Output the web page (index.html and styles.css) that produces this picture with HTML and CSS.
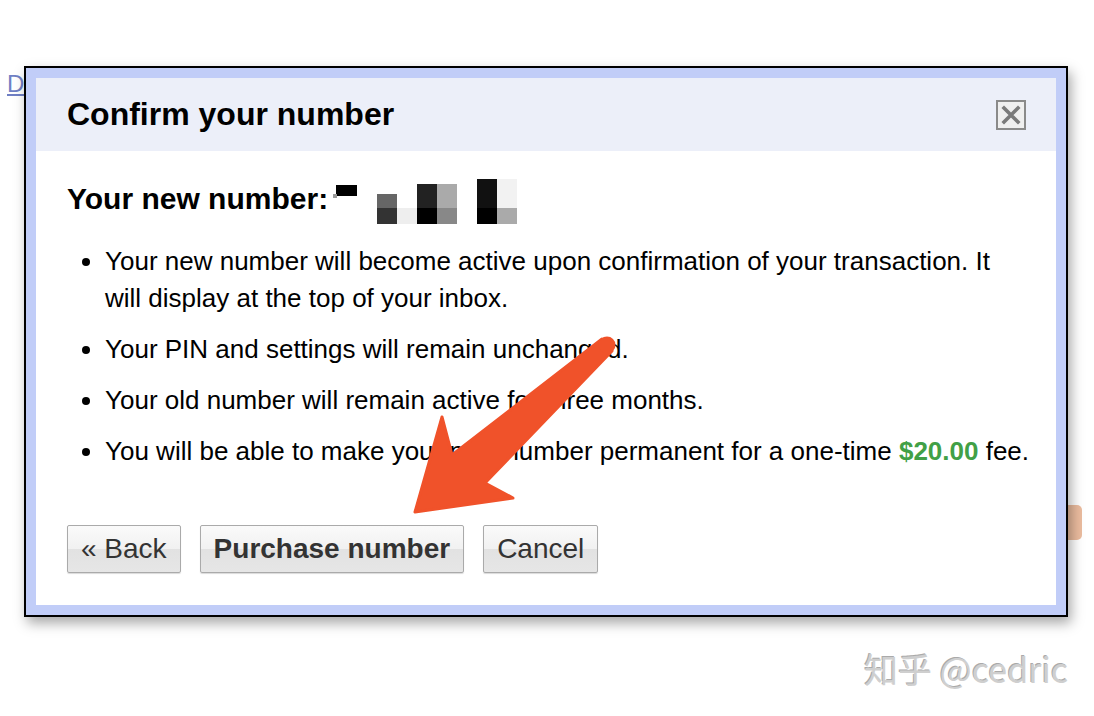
FILE: index.html
```html
<!DOCTYPE html>
<html>
<head>
<meta charset="utf-8">
<link rel="stylesheet" href="styles.css">
</head>
<body>
<div class="page">
  <a class="bg-link" href="#">D</a>
  <div class="bg-btn"></div>
  <div class="dialog">
    <div class="frame">
      <div class="header">
        <h1 class="title">Confirm your number</h1>
        <div class="close">
          <svg width="22" height="22" viewBox="0 0 22 22"><path d="M4 4 L18 18 M18 4 L4 18" stroke="#7a7a7a" stroke-width="3.6" stroke-linecap="square"/></svg>
        </div>
      </div>
      <div class="body">
        <h2 class="newnum">Your new number:<svg class="pix" width="190" height="50" viewBox="0 0 190 50">
          <rect x="3" y="8" width="21" height="11" fill="#000"/>
          <rect x="0" y="17" width="4" height="4" fill="#999"/>
          <rect x="44" y="17" width="20" height="14" fill="#666"/>
          <rect x="44" y="31" width="20" height="16" fill="#333"/>
          <rect x="64" y="31" width="20" height="16" fill="#eee"/>
          <rect x="84" y="7" width="20" height="24" fill="#222"/>
          <rect x="84" y="31" width="20" height="16" fill="#000"/>
          <rect x="104" y="7" width="20" height="24" fill="#aaa"/>
          <rect x="104" y="31" width="20" height="16" fill="#888"/>
          <rect x="144" y="2" width="20" height="29" fill="#111"/>
          <rect x="144" y="31" width="20" height="16" fill="#000"/>
          <rect x="164" y="2" width="20" height="29" fill="#f2f2f2"/>
          <rect x="164" y="31" width="20" height="16" fill="#aaa"/>
        </svg></h2>
        <ul class="list">
          <li>Your new number will become active upon confirmation of your transaction. It will display at the top of your inbox.</li>
          <li>Your PIN and settings will remain unchanged.</li>
          <li>Your old number will remain active for three months.</li>
          <li class="nowrap">You will be able to make your new number permanent for a one-time <b class="price">$20.00</b> fee.</li>
        </ul>
        <div class="buttons">
          <button class="btn">« Back</button>
          <button class="btn btn-bold">Purchase number</button>
          <button class="btn">Cancel</button>
        </div>
      </div>
    </div>
  </div>
  <svg class="arrow" width="1094" height="716" viewBox="0 0 1094 716">
    <polygon points="602,339 452,455 442,417 415,512 513,498 485,483 612,351" fill="#f0522a" stroke="#f0522a" stroke-width="3" stroke-linejoin="round"/>
    <circle cx="607" cy="345" r="8.5" fill="#f0522a"/>
  </svg>
  <div class="watermark">知乎 @cedric</div>
</div>
</body>
</html>
```

FILE: styles.css
```css
html, body {
  margin: 0;
  padding: 0;
  background: #ffffff;
}
.page {
  position: relative;
  width: 1094px;
  height: 716px;
  overflow: hidden;
  font-family: "Liberation Sans", Arial, sans-serif;
}
.bg-link {
  position: absolute;
  left: 7px;
  top: 70px;
  font-size: 24px;
  color: #6f7fc4;
  text-decoration: underline;
}
.bg-btn {
  position: absolute;
  left: 1060px;
  top: 505px;
  width: 22px;
  height: 35px;
  border-radius: 5px;
  background: #ebbc9f;
}
.dialog {
  position: absolute;
  left: 24px;
  top: 66px;
  width: 1040px;
  border: 2px solid #000;
  background: #c1cdf8;
  box-shadow: 3px 6px 12px rgba(0, 0, 0, 0.35);
}
.frame {
  margin: 10px;
  background: #fff;
}
.header {
  height: 73px;
  background: #eceff9;
  display: flex;
  align-items: center;
  justify-content: space-between;
  padding: 0 30px 0 31px;
}
.title {
  margin: 0;
  font-size: 32px;
  font-weight: bold;
  color: #000;
}
.close {
  width: 26px;
  height: 26px;
  border: 2px solid #8a8a8a;
  background: #efefef;
  display: flex;
  align-items: center;
  justify-content: center;
}
.body {
  padding: 30px 26px 32px 31px;
}
.newnum {
  margin: 0;
  height: 36px;
  font-size: 30px;
  line-height: 36px;
  font-weight: bold;
  color: #000;
  display: flex;
  align-items: center;
}
.pix {
  flex: none;
  margin-left: 5px;
  margin-top: 6px;
}
.list {
  margin: 26px 0 0 0;
  padding-left: 38px;
  font-size: 26px;
  line-height: 37px;
  color: #000;
}
.list li {
  margin-bottom: 14px;
}
.list li:last-child {
  margin-bottom: 0;
}
.list li.nowrap {
  white-space: nowrap;
}
.price {
  color: #41a046;
}
.buttons {
  display: flex;
  gap: 19px;
  margin-top: 55px;
}
.btn {
  height: 48px;
  padding: 0 13px;
  font-family: "Liberation Sans", Arial, sans-serif;
  font-size: 28px;
  color: #333;
  border: 1px solid #aaa;
  border-radius: 2px;
  background: linear-gradient(#fafafa 0%, #f1f1f1 50%, #e2e2e2 51%, #e6e6e6 100%);
  box-shadow: 0 1px 1px rgba(0,0,0,0.15);
}
.btn-bold {
  font-weight: bold;
}
.arrow {
  position: absolute;
  left: 0;
  top: 0;
  pointer-events: none;
}
.watermark {
  position: absolute;
  left: 864px;
  top: 644px;
  font-family: "Noto Sans CJK SC", sans-serif;
  font-size: 34px;
  color: #cfcfcf;
  text-shadow: 1px 1px 0 #fff, -1px -1px 0 #aaa;
}
```
